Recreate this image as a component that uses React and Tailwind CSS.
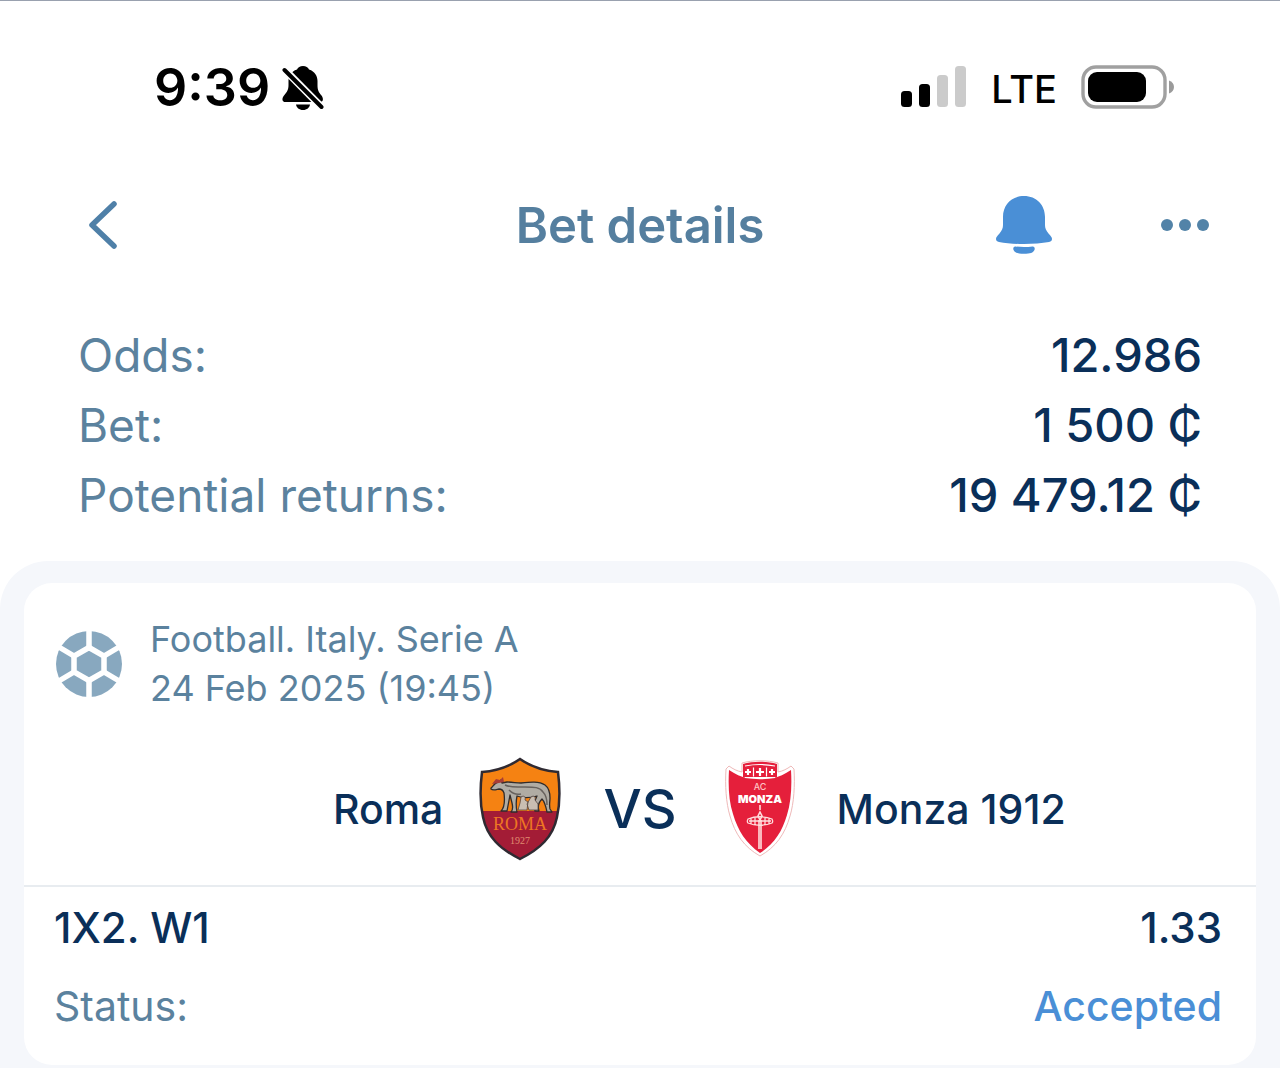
import React from 'react'

const summary = [
  { label: 'Odds:', value: '12.986' },
  { label: 'Bet:', value: '1 500 ₵' },
  { label: 'Potential returns:', value: '19 479.12 ₵' },
]

const BellOffIcon = () => (
  <svg viewBox="0 0 42 44" className="w-[42px] h-11" fill="black" aria-hidden="true">
    <path d="M21 0c-3 0-5 1.500-6 3.500C9 5.500 6.500 10 6.500 15v4c0 5-1.500 7-4.500 10.500C-.5 33 0 36 3.500 36H38c3 0 4-3 1.500-6.500C36.500 26 35.500 24 35.500 19v-4c0-5-2.500-9.500-8.500-11.500C26 1.500 24 0 21 0z" />
    <path d="M14 38.500h14c-.5 3-3 5.500-7 5.500s-6.500-2.500-7-5.500z" />
    <path d="M-1 0 42 43.500" stroke="white" strokeWidth="7.500" />
    <path d="M2.500 4 39.500 41" stroke="black" strokeWidth="4" strokeLinecap="round" />
  </svg>
)

const SignalIcon = () => (
  <svg viewBox="0 0 66 42" className="w-[66px] h-[42px]" aria-hidden="true">
    <rect x="0" y="25" width="11" height="16" rx="3.500" />
    <rect x="18" y="18" width="11" height="23" rx="3.500" />
    <rect x="36" y="9" width="11" height="32" rx="3.500" fill="#cbcbcb" />
    <rect x="54" y="0" width="11" height="41" rx="3.500" fill="#cbcbcb" />
  </svg>
)

const BatteryIcon = () => (
  <svg viewBox="0 0 94 44" className="w-[94px] h-11" aria-hidden="true">
    <rect x="2" y="2" width="82" height="40" rx="13" fill="none" stroke="#a0a0a0" strokeWidth="3.400" />
    <rect x="7" y="7" width="58" height="30" rx="9" />
    <path d="M88 15.500c3 .8 5 3.400 5 6.500s-2 5.700-5 6.500z" fill="#9a9a9a" />
  </svg>
)

const BellIcon = () => (
  <svg viewBox="0 0 56 58" className="w-14 h-[58px]" fill="#4a8fd6" aria-hidden="true">
    <path d="M28 0C15.500 0 7 9 7 21v8c0 3-1 5.500-3.500 8.500C1 40 0 41.500 0 43c0 1.600 1 2.500 3 3 7 1.300 16 2 25 2s18-.7 25-2c2-.5 3-1.400 3-3 0-1.500-1-3-3.500-5.500C50 34.500 49 32 49 29v-8C49 9 40.500 0 28 0z" />
    <path d="M19.500 50.500c5.500.7 11.500.7 17 0 2-.3 2.800 2 1.800 3.700-1 2.300-4 3.600-10.300 3.600s-9.300-1.300-10.300-3.600c-1-1.700-.2-4 1.800-3.700z" />
  </svg>
)

const FootballIcon = () => (
  <svg viewBox="0 0 66 66" className="w-[66px] h-[66px] shrink-0" aria-hidden="true">
    <circle cx="33" cy="33" r="33" fill="#88a8bf" />
    <g stroke="white" strokeWidth="5.500" fill="none">
      <path d="M33 16.500 48 25v16L33 49.500 18 41V25z" />
      <path d="M33 17V-1M33 49v18M48 25 64 15.500M48 41 64 50.500M18 25 2 15.500M18 41 2 50.500" />
    </g>
  </svg>
)

const RomaCrest = () => (
  <svg viewBox="0 0 82 104" className="w-[82px] h-26" role="img" aria-label="Roma crest">
    <defs>
      <clipPath id="roma-shield">
        <path d="M41 2C31 9 17 14 3 15c-2 16-2 32 1 45 4 20 17 32 37 42 20-10 33-22 37-42 3-13 3-29 1-45C65 14 51 9 41 2z" />
      </clipPath>
    </defs>
    <g clipPath="url(#roma-shield)">
      <rect width="82" height="54" fill="#f58212" />
      <rect y="54" width="82" height="50" fill="#a31c36" />
    </g>
    {/* wolf */}
    <path
      d="M12 31c2-1 3-5 7-6l3-2 1 3 5-1c6 0 9 1 14 1 9-1 18-2 24 2 4 3 5 7 5 13 0 4-1 6 0 11l2 3h-5c-1-5-2-10-5-13-3 3-5 6-3 12h-4c-1-5-1-10 2-15-7 2-15 2-20 0-1 5-1 11 0 16h-6c2-2 2-5 1-9l-2-8-3 16h-6c3-3 4-10 3-18-1-3-3-4-5-4-4 1-6 2-8 0z"
      fill="#b0aca4"
      stroke="#312c2b"
      strokeWidth="1.300"
      strokeLinejoin="round"
    />
    <path d="M26 28c6 3 12 2 20 2 9 0 15 0 18 5 3 3 4 8 4 13M30 33c3 3 8 5 12 4" fill="none" stroke="#67615d" strokeWidth="1.500" />
    <path d="m13 27 4-5 4 1 3-3 1 5-5 1" fill="#a83d36" />
    <g fill="#c9beb2" stroke="#554641" strokeWidth=".8">
      <path d="M42 40c3-2 5 0 4 3l3 2-1 8H39l2-7zM52 40c3-2 5 0 4 3l3 4v6h-9l-2-6z" />
    </g>
    <path d="M41 2C31 9 17 14 3 15c-2 16-2 32 1 45 4 20 17 32 37 42 20-10 33-22 37-42 3-13 3-29 1-45C65 14 51 9 41 2z" fill="none" stroke="#2f2a32" strokeWidth="2.500" />
    <text x="41" y="73" textAnchor="middle" fontFamily="Liberation Serif, serif" fontSize="18" fill="#ee7623">ROMA</text>
    <text x="41" y="87" textAnchor="middle" fontFamily="Liberation Serif, serif" fontSize="10" fill="#e08c70">1927</text>
  </svg>
)

const MonzaCrest = () => (
  <svg viewBox="0 0 70 98" className="w-[70px] h-[98px]" role="img" aria-label="Monza crest">
    <g stroke="#efb9b9" strokeWidth="1" fill="white">
      <path d="M17 3c10-3 26-3 36 0v9c5-1 9-3 13-6l3 3c1 16 0 34-4 47-5 18-14 31-30 40C19 87 10 74 5 56 1 43 0 25 1 9l3-3c4 3 8 5 13 6z" />
    </g>
    <path d="M4 10c6 4 12 7 19 8h24c7-1 13-4 19-8 1 17 0 32-4 45-5 17-13 29-27 38C21 83 13 71 8 54 4 42 3 27 4 10z" fill="#e51f3b" />
    <path d="M18 4c10-3 24-3 34 0v13H18z" fill="#e51f3b" />
    <path d="M20 6c10-2 20-2 30 0M20 17.500c10 1.500 20 1.500 30 0" fill="none" stroke="white" strokeWidth="1.200" />
    <g stroke="white" strokeWidth="2.200" fill="none">
      <path d="M20 12h6M23 9v6M31 12h8M35 8v8M44 12h6M47 9v6" />
      <path d="M28.500 7.500v9M41.500 7.500v9" strokeWidth="1.200" />
    </g>
    <text x="35" y="30" textAnchor="middle" fontFamily="Inter, sans-serif" fontSize="9" fill="#ffc3c3">AC</text>
    <text x="35" y="43" textAnchor="middle" fontFamily="Inter, sans-serif" fontSize="11" fontWeight="900" fill="white">MONZA</text>
    <g fill="none" stroke="#ffdede">
      <path d="M35 45v5M35 52l2 4-2 4-2-4zM34 60v29M36 60v29" strokeWidth="1.600" />
      <path d="M23 59c7-3 17-3 24 0 1 2 1 3 0 4-7 3-17 3-24 0-1-1-1-2 0-4zM26 58v6M30 57v8M40 57v8M44 58v6M24 61h22" strokeWidth="1.300" />
    </g>
  </svg>
)

const StatusBar = () => (
  <div className="flex items-center justify-between h-[174px] pl-[154px] pr-[105px] text-black border-t border-gray-400">
    <div className="flex items-center gap-3">
      <span className="text-[52px] leading-none font-semibold">9:39</span>
      <BellOffIcon />
    </div>
    <div className="flex items-center gap-6 pb-[2px]">
      <SignalIcon />
      <span className="pt-1 text-[38px] leading-none font-medium">LTE</span>
      <BatteryIcon />
    </div>
  </div>
)

const Header = () => (
  <header className="grid grid-cols-[1fr_auto_1fr] items-center h-[102px] px-[70px]">
    <button type="button" aria-label="Back" className="justify-self-start pl-[18px]">
      <svg viewBox="0 0 30 48" className="w-[30px] h-12" fill="none" stroke="#4f80a8" strokeWidth="5.500" strokeLinecap="round" strokeLinejoin="round">
        <path d="M26 3 4 24l22 21" />
      </svg>
    </button>
    <h1 className="text-[49px] leading-none font-semibold text-[#557f9f]">Bet details</h1>
    <div className="flex items-center justify-end gap-[108px]">
      <button type="button" aria-label="Notifications">
        <BellIcon />
      </button>
      <button type="button" aria-label="More">
        <svg viewBox="0 0 50 12" className="w-[50px] h-3" fill="#5283a8">
          <circle cx="7" cy="6" r="6" />
          <circle cx="25" cy="6" r="6" />
          <circle cx="43" cy="6" r="6" />
        </svg>
      </button>
    </div>
  </header>
)

const App = () => {
  return (
    <main className="min-h-screen bg-white font-['Inter',sans-serif] text-[#0a2f59]">
      <StatusBar />
      <Header />
      <dl className="pt-11 pb-[31px] px-[78px] text-[46px] leading-[70px]">
        {summary.map((row) => (
          <div key={row.label} className="flex justify-between">
            <dt className="text-[#5b829e]">{row.label}</dt>
            <dd className="text-[47px] font-medium">{row.value}</dd>
          </div>
        ))}
      </dl>

      <section className="bg-[#f5f7fb] rounded-t-[48px] px-6 pt-[22px] pb-1">
        <article className="bg-white rounded-[28px]">
          <div className="flex items-center gap-7 px-8 pt-8 text-[36px] leading-[49px] text-[#5b829e]">
            <FootballIcon />
            <div>
              <p>Football. Italy. Serie A</p>
              <p>24 Feb 2025 (19:45)</p>
            </div>
          </div>

          <div className="grid grid-cols-[1fr_auto_1fr] items-center gap-[42px] h-[172px] px-8 pt-5 text-[41px] leading-none font-medium">
            <div className="flex items-center justify-end gap-9">
              <span>Roma</span>
              <RomaCrest />
            </div>
            <span className="text-[54px]">VS</span>
            <div className="flex items-center gap-[42px] pl-[6px]">
              <MonzaCrest />
              <span>Monza 1912</span>
            </div>
          </div>

          <div className="border-t-2 border-[#e8ecf0] pl-[30px] pr-[34px] pt-[2px] pb-5 text-[41px] leading-[78px]">
            <div className="flex justify-between text-[42px] font-medium">
              <span>1X2. W1</span>
              <span>1.33</span>
            </div>
            <div className="flex justify-between">
              <span className="text-[#5b829e]">Status:</span>
              <span className="font-medium text-[#4a8fd6]">Accepted</span>
            </div>
          </div>
        </article>
      </section>
    </main>
  )
}

export default App
